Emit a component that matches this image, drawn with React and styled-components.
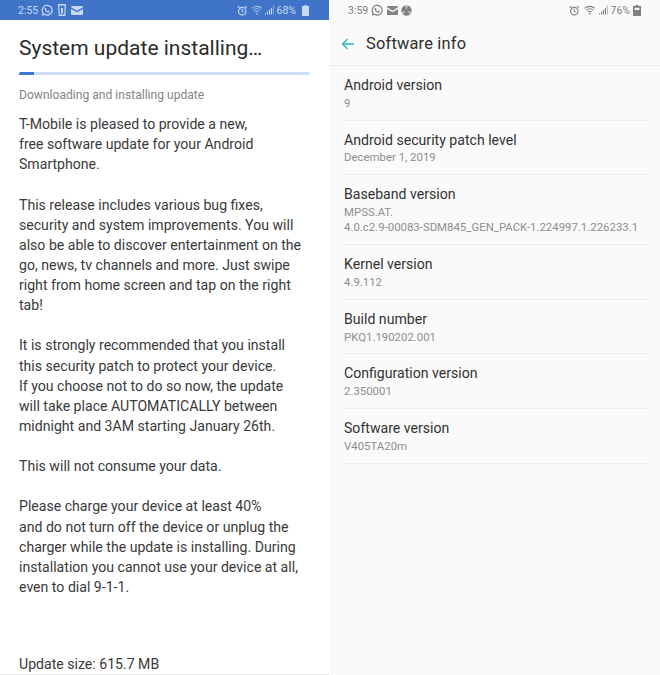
import React from 'react'
import styled, { createGlobalStyle } from 'styled-components'

const Global = createGlobalStyle`
    html, body {
        margin: 0;
        padding: 0;
        background: #fafafa;
    }
    body {
        font-family: Roboto, "Noto Sans", sans-serif;
        overflow: hidden;
    }
`

const Page = styled.div`
    width: 660px;
    height: 675px;
    display: flex;
    overflow: hidden;
`

const LeftPane = styled.div`
    width: 329px;
    height: 675px;
    background: #fff;
    border-bottom: 1px solid #e4e4e4;
    box-sizing: border-box;
    display: flex;
    flex-direction: column;
    flex-shrink: 0;
`

const RightPane = styled.div`
    flex: 1;
    background: #fafafa;
    display: flex;
    flex-direction: column;
`

const StatusBar = styled.div`
    height: 20px;
    display: flex;
    align-items: center;
    justify-content: space-between;
    box-sizing: border-box;
    flex-shrink: 0;
    font-size: 10.5px;
    color: ${p => p.$light ? '#c9d9f3' : '#7f8183'};
    background: ${p => p.$light ? '#3f74c9' : 'transparent'};
    padding: ${p => p.$light ? '0 20px 0 18px' : '0 19px 0 19px'};
`

const StatusGroup = styled.div`
    display: flex;
    align-items: center;
`

const StatusText = styled.span`
    margin-left: ${p => p.$ml || 0}px;
`

const Icon = styled.svg`
    display: block;
    flex-shrink: 0;
    fill: currentColor;
    margin-left: ${p => p.$ml || 0}px;
`

const LineIcon = styled.svg`
    display: block;
    flex-shrink: 0;
    fill: none;
    stroke: currentColor;
    margin-left: ${p => p.$ml || 0}px;
    opacity: ${p => p.$dim ? 0.75 : 1};
`

const LeftBody = styled.div`
    flex: 1;
    padding: 0 19px;
    display: flex;
    flex-direction: column;
`

const Title = styled.h1`
    margin: 14px 0 0;
    font-size: 21px;
    line-height: 28px;
    font-weight: 400;
    color: #2b2b2b;
`

const Track = styled.div`
    height: 3px;
    width: 291px;
    margin-top: 10px;
    background: #cfe0f6;
    border-radius: 2px;
    overflow: hidden;
`

const Fill = styled.div`
    height: 100%;
    background: #3a78e0;
`

const Subhead = styled.div`
    margin-top: 12px;
    font-size: 12.1px;
    line-height: 16px;
    color: #858585;
`

const Copy = styled.div`
    margin-top: 11px;
    font-size: 14.1px;
    line-height: 20.13px;
    color: #3a3a3a;
`

const Para = styled.p`
    margin: 0 0 20.13px;
    white-space: pre-line;
`

const UpdateSize = styled.div`
    margin-top: auto;
    margin-bottom: 1px;
    font-size: 14.1px;
    line-height: 18px;
    color: #3a3a3a;
`

const AppBar = styled.div`
    height: 46px;
    display: flex;
    align-items: center;
    gap: 11px;
    padding: 2px 0 0 12px;
    box-sizing: border-box;
    border-bottom: 1px solid #ececec;
    flex-shrink: 0;
`

const AppTitle = styled.div`
    font-size: 16.4px;
    color: #2e2e2e;
    letter-spacing: 0.2px;
`

const Back = styled.svg`
    display: block;
    fill: none;
    stroke: #2fb9bf;
    stroke-width: 1.4;
`

const InfoList = styled.div`
    padding: 0 12px 0 15px;
    display: flex;
    flex-direction: column;
`

const InfoRow = styled.div`
    padding: 10px 0 8.4px;
    border-bottom: 1px solid #ececec;
`

const InfoLabel = styled.div`
    font-size: 14.1px;
    line-height: 19px;
    color: #333;
`

const InfoValue = styled.div`
    font-size: 11.4px;
    line-height: 15.4px;
    margin-top: 0.8px;
    color: #8e8e8e;
    white-space: pre;
`

const Whatsapp = ({ ml }) => (
    <Icon $ml={ml} width="12.500" height="12.500" viewBox="0 0 12 12">
        <path d="M6 .6a5.300 5.300 0 0 0-4.600 8L.6 11.400l2.900-.8A5.300 5.300 0 1 0 6 .6zm0 1.200a4.100 4.100 0 1 1-2.300 7.500l-1.400.4.400-1.300A4.100 4.100 0 0 1 6 1.800z" />
        <path d="M4.400 3.500c.5 0 .9 1.100.8 1.400l-.4.6c.3.700.9 1.300 1.700 1.600l.6-.5c.3-.1 1.300.4 1.300.7 0 .7-.7 1.200-1.400 1.100-2-.3-3.400-1.700-3.600-3.500-.1-.6.300-1.400 1-1.400z" />
    </Icon>
)

const Mail = ({ ml, w }) => (
    <Icon $ml={ml} width={w} height="9" viewBox="0 0 10 8" preserveAspectRatio="none">
        <path d="M0 1.200C0 .5.500 0 1.100 0h7.800C9.500 0 10 .5 10 1.200L5 4.200zM0 2.600l5 3 5-3v4.200C10 7.500 9.500 8 8.900 8H1.100C.5 8 0 7.500 0 6.800z" />
    </Icon>
)

const Trash = ({ ml }) => (
    <Icon $ml={ml} width="8" height="12" viewBox="0 0 8 12">
        <path fillRule="evenodd" d="M0 0h8l-.7 12H.7zM1.300 1.500l.5 9h4.400l.5-9zM3 4h2v5.500H3z" />
    </Icon>
)

const Ball = ({ ml }) => (
    <LineIcon $ml={ml} width="11" height="11" viewBox="0 0 11 11" stroke="none">
        <circle cx="5.500" cy="5.500" r="5.200" fill="currentColor" stroke="none" />
        <path d="M5.500 4.200V1.800L3.900 .9M5.500 1.800L7.100 .9M4.200 6.200L2.200 7.400 2.300 9.300M2.200 7.400L.7 6.900M6.800 6.200L8.800 7.400 8.700 9.300M8.800 7.400L10.300 6.900" stroke="#e9e9e9" strokeWidth=".8" fill="none" />
    </LineIcon>
)

const Alarm = ({ ml }) => (
    <LineIcon $ml={ml} width="10.500" height="11" viewBox="0 0 11 11" strokeWidth="1.200">
        <circle cx="5.500" cy="6.200" r="3.900" />
        <path d="M5.500 3.800V6.200l1.500 1M.8 2.600L2.600.9M10.200 2.600L8.400.9" />
    </LineIcon>
)

const Wifi = ({ ml, dim }) => (
    <LineIcon $ml={ml} $dim={dim} width="11.500" height="10" viewBox="0 0 12 10" strokeWidth="1.100">
        <path d="M.6 3.400a7.800 7.800 0 0 1 10.800 0M2.300 5.300a5.300 5.300 0 0 1 7.400 0M4 7.100a2.800 2.800 0 0 1 4 0" />
        <circle cx="6" cy="8.800" r=".9" fill="currentColor" stroke="none" />
    </LineIcon>
)

const Signal = ({ ml }) => (
    <Icon $ml={ml} width="9" height="10" viewBox="0 0 10 10">
        <path d="M0 8.500h1.200V10H0zM2.200 6.800h1.200V10H2.200zM4.400 4.800h1.200V10H4.400zM6.600 2.500h1.200V10H6.600z" />
        <path d="M8.800 0H10v10H8.800z" opacity=".5" />
    </Icon>
)

const Battery = ({ ml, hollow }) => (
    <Icon $ml={ml} width={hollow ? 8 : 7} height="11" viewBox="0 0 7 10" preserveAspectRatio="none">
        {hollow
            ? <path fillRule="evenodd" d="M2.300 0h2.400v1H7v9H0V1h2.300zM1.400 2.400v2.200h4.200V2.400z" />
            : <path d="M2.300 0h2.400v1H7v9H0V1h2.300z" />}
    </Icon>
)

const paragraphs = [
    'T-Mobile is pleased to provide a new,\nfree software update for your Android\nSmartphone.',
    'This release includes various bug fixes,\nsecurity and system improvements. You will\nalso be able to discover entertainment on the\ngo, news, tv channels and more. Just swipe\nright from home screen and tap on the right\ntab!',
    'It is strongly recommended that you install\nthis security patch to protect your device.\nIf you choose not to do so now, the update\nwill take place AUTOMATICALLY between\nmidnight and 3AM starting January 26th.',
    'This will not consume your data.',
    'Please charge your device at least 40%\nand do not turn off the device or unplug the\ncharger while the update is installing. During\ninstallation you cannot use your device at all,\neven to dial 9-1-1.',
]

const infoRows = [
    ['Android version', '9'],
    ['Android security patch level', 'December 1, 2019'],
    ['Baseband version', 'MPSS.AT.\n4.0.c2.9-00083-SDM845_GEN_PACK-1.224997.1.226233.1'],
    ['Kernel version', '4.9.112'],
    ['Build number', 'PKQ1.190202.001'],
    ['Configuration version', '2.350001'],
    ['Software version', 'V405TA20m'],
]

export default function App() {
    return (
        <Page>
            <Global />
            <LeftPane>
                <StatusBar $light>
                    <StatusGroup>
                        <StatusText>2:55</StatusText>
                        <Whatsapp ml={3} />
                        <Trash ml={4} />
                        <Mail ml={5} w={12} />
                    </StatusGroup>
                    <StatusGroup>
                        <Alarm />
                        <Wifi ml={4} dim />
                        <Signal ml={2} />
                        <StatusText $ml={3}>68%</StatusText>
                        <Battery ml={6} />
                    </StatusGroup>
                </StatusBar>
                <LeftBody>
                    <Title>System update installing…</Title>
                    <Track><Fill style={{ width: '5%' }} /></Track>
                    <Subhead>Downloading and installing update</Subhead>
                    <Copy>
                        {paragraphs.map((text, i) => <Para key={i}>{text}</Para>)}
                    </Copy>
                    <UpdateSize>Update size: 615.7 MB</UpdateSize>
                </LeftBody>
            </LeftPane>
            <RightPane>
                <StatusBar>
                    <StatusGroup>
                        <StatusText>3:59</StatusText>
                        <Whatsapp ml={3} />
                        <Mail ml={3} w={11} />
                        <Ball ml={3} />
                    </StatusGroup>
                    <StatusGroup>
                        <Alarm />
                        <Wifi ml={5} />
                        <Signal ml={3} />
                        <StatusText $ml={3}>76%</StatusText>
                        <Battery ml={3} hollow />
                    </StatusGroup>
                </StatusBar>
                <AppBar>
                    <Back width="14" height="12" viewBox="0 0 14 12">
                        <path d="M13 6H1.500M6.500 1L1.500 6l5 5" />
                    </Back>
                    <AppTitle>Software info</AppTitle>
                </AppBar>
                <InfoList>
                    {infoRows.map(([label, value]) => (
                        <InfoRow key={label}>
                            <InfoLabel>{label}</InfoLabel>
                            <InfoValue>{value}</InfoValue>
                        </InfoRow>
                    ))}
                </InfoList>
            </RightPane>
        </Page>
    )
}
